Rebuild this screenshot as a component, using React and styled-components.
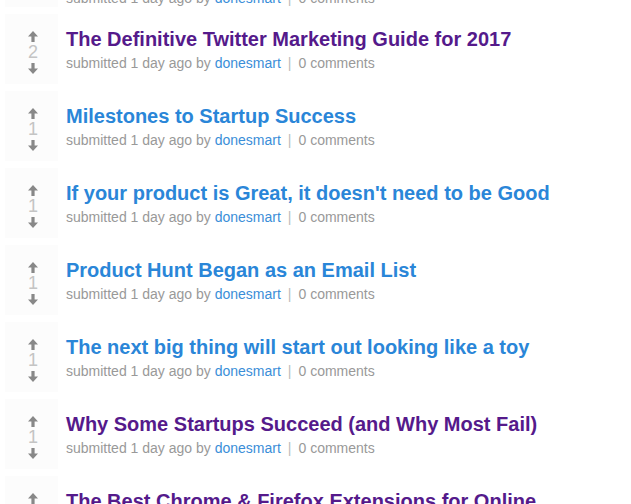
import React from 'react'
import styled, { createGlobalStyle } from 'styled-components'

const GlobalStyle = createGlobalStyle`
  html, body {
    margin: 0;
    padding: 0;
    background: #fff;
    overflow: hidden;
  }
  body {
    font-family: "Liberation Sans", Arial, sans-serif;
  }
`

const List = styled.div`
  display: flex;
  flex-direction: column;
  gap: 7px;
  padding-left: 5px;
  margin-top: -75px;
`

const Row = styled.div`
  display: flex;
  align-items: stretch;
  min-height: 70px;
`

const Vote = styled.div`
  flex: 0 0 53px;
  box-sizing: border-box;
  display: flex;
  flex-direction: column;
  align-items: center;
  padding: 17px 0 0 3px;
  background: #fcfcfc;
`

const Score = styled.div`
  font-size: 18px;
  line-height: 20px;
  height: 20px;
  color: #c4c4c4;
  margin-bottom: 1px;
`

const Content = styled.div`
  flex: 1;
  padding: 13px 20px 0 8px;
`

const Title = styled.a`
  display: block;
  font-size: 20px;
  line-height: 24px;
  font-weight: bold;
  text-decoration: none;
  color: ${props => props.visited ? '#551a8b' : '#2a86d8'};
`

const Meta = styled.div`
  margin-top: 3px;
  font-size: 14px;
  line-height: 18px;
  color: #999;
  white-space: nowrap;
`

const Author = styled.a`
  color: #3a8ed8;
  text-decoration: none;
`

const Sep = styled.span`
  margin: 0 7px;
  color: #bbb;
`

const Arrow = ({ down }) => (
  <svg width="10" height="11" viewBox="0 0 10 11" style={down ? { transform: 'rotate(180deg)' } : null}>
    <path d="M5 0 L10 5.5 L6.6 5.5 L6.6 11 L3.4 11 L3.4 5.5 L0 5.5 Z" fill="#888" />
  </svg>
)

const posts = [
  { title: '10 Growth Hacking Lessons Learned From Building and Scaling Online Marketplaces', score: 1, visited: true },
  { title: 'The Definitive Twitter Marketing Guide for 2017', score: 2, visited: true },
  { title: 'Milestones to Startup Success', score: 1 },
  { title: "If your product is Great, it doesn't need to be Good", score: 1 },
  { title: 'Product Hunt Began as an Email List', score: 1 },
  { title: 'The next big thing will start out looking like a toy', score: 1 },
  { title: 'Why Some Startups Succeed (and Why Most Fail)', score: 1, visited: true },
  { title: 'The Best Chrome & Firefox Extensions for Online Marketing', score: 1, visited: true },
]

const App = () => (
  <>
    <GlobalStyle />
    <List>
      {posts.map((p, i) => (
        <Row key={i}>
          <Vote>
            <Arrow />
            <Score>{p.score}</Score>
            <Arrow down />
          </Vote>
          <Content>
            <Title href="#" visited={p.visited ? 1 : 0}>{p.title}</Title>
            <Meta>
              submitted 1 day ago by <Author href="#">donesmart</Author>
              <Sep>|</Sep>0 comments
            </Meta>
          </Content>
        </Row>
      ))}
    </List>
  </>
)

export default App
